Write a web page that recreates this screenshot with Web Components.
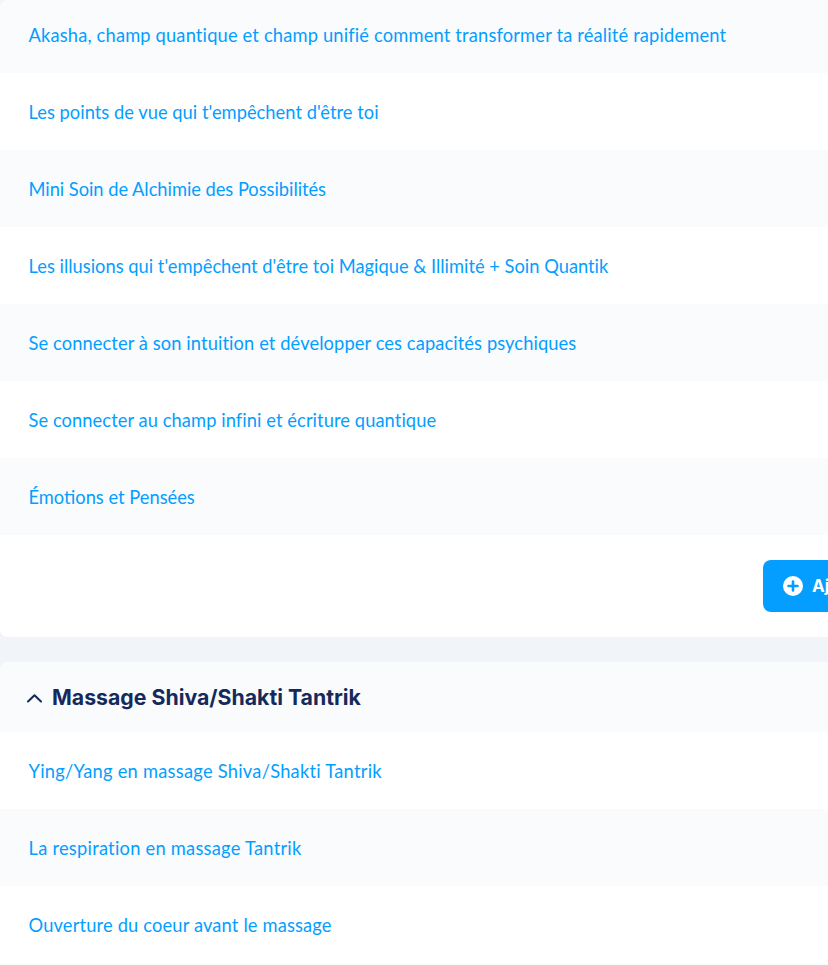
<!DOCTYPE html>
<html lang="fr"><head><meta charset="utf-8"><title>Cours</title>
<style>
html,body{margin:0;padding:0;background:#f1f4f9;overflow:hidden;height:965px;width:828px}
</style></head><body>
<course-page>
<course-section>
<lesson-row shade first style="--ls:.17px">Akasha, champ quantique et champ unifié comment transformer ta réalité rapidement</lesson-row>
<lesson-row style="--ls:.03px">Les points de vue qui t'empêchent d'être toi</lesson-row>
<lesson-row shade style="--ls:-.03px">Mini Soin de Alchimie des Possibilités</lesson-row>
<lesson-row style="--ls:.01px">Les illusions qui t'empêchent d'être toi Magique &amp; Illimité + Soin Quantik</lesson-row>
<lesson-row shade>Se connecter à son intuition et développer ces capacités psychiques</lesson-row>
<lesson-row style="--ls:.08px">Se connecter au champ infini et écriture quantique</lesson-row>
<lesson-row shade style="--ls:0px">Émotions et Pensées</lesson-row>
<add-bar>Ajouter une leçon</add-bar>
</course-section>
<course-section titled="Massage Shiva/Shakti Tantrik">
<lesson-row style="--ls:.25px">Ying/Yang en massage Shiva/Shakti Tantrik</lesson-row>
<lesson-row shade style="--ls:.25px">La respiration en massage Tantrik</lesson-row>
<lesson-row style="--ls:.16px">Ouverture du coeur avant le massage</lesson-row>
<lesson-row shade></lesson-row>
</course-section>
</course-page>
<script>
function shadow(el,html){el.attachShadow({mode:'open'}).innerHTML=html;}
customElements.define('course-page',class extends HTMLElement{constructor(){super();shadow(this,`<style>:host{display:flex;flex-direction:column;gap:25px;width:860px}</style><slot></slot>`);}});
customElements.define('course-section',class extends HTMLElement{connectedCallback(){
 const t=this.getAttribute('titled');
 shadow(this,`<style>:host{display:block;background:#fff;border-radius:8px;overflow:hidden}
 header{display:flex;align-items:center;gap:9px;height:70px;padding-left:26px;background:#fafbfd;color:#152a5c;font:700 21.27px "Inter",sans-serif}
 svg{width:17px;height:17px;flex:none}</style>
 ${t?`<header><svg viewBox="0 0 17 17" fill="none" stroke="#152a5c" stroke-width="2" stroke-linecap="round" stroke-linejoin="round"><path d="M2 12.5 8.5 6.2l6.5 6.3"/></svg><span>${t}</span></header>`:''}<slot></slot>`);
}});
customElements.define('lesson-row',class extends HTMLElement{constructor(){super();shadow(this,`<style>:host{display:flex;align-items:center;height:77px;box-sizing:border-box;padding-left:28.5px;background:#fff;color:#039eff;font:400 18.3px "Lato",sans-serif;letter-spacing:var(--ls,.1px);white-space:nowrap}
 :host([shade]){background:#fafbfd}:host([first]){height:73px}
 span{position:relative}
 :host([first]) span{top:-2px}</style><span><slot></slot></span>`);}});
customElements.define('add-bar',class extends HTMLElement{constructor(){super();shadow(this,`<style>:host{display:flex;height:102px;box-sizing:border-box;padding:25px 0 0 763px;background:#fff}
 .b{display:flex;align-items:center;gap:9px;flex:none;height:52px;box-sizing:border-box;padding:0 20px;background:#039eff;border-radius:8px;color:#fff;font:700 17px "Inter",sans-serif;white-space:nowrap}
 svg{width:20px;height:20px;flex:none}</style><div class="b"><svg viewBox="0 0 20 20"><circle cx="10" cy="10" r="10" fill="#fff"/><path d="M10 5.5v9M5.5 10h9" stroke="#039eff" stroke-width="2.6" stroke-linecap="round"/></svg><slot></slot></div>`);}});
</script>
</body></html>
